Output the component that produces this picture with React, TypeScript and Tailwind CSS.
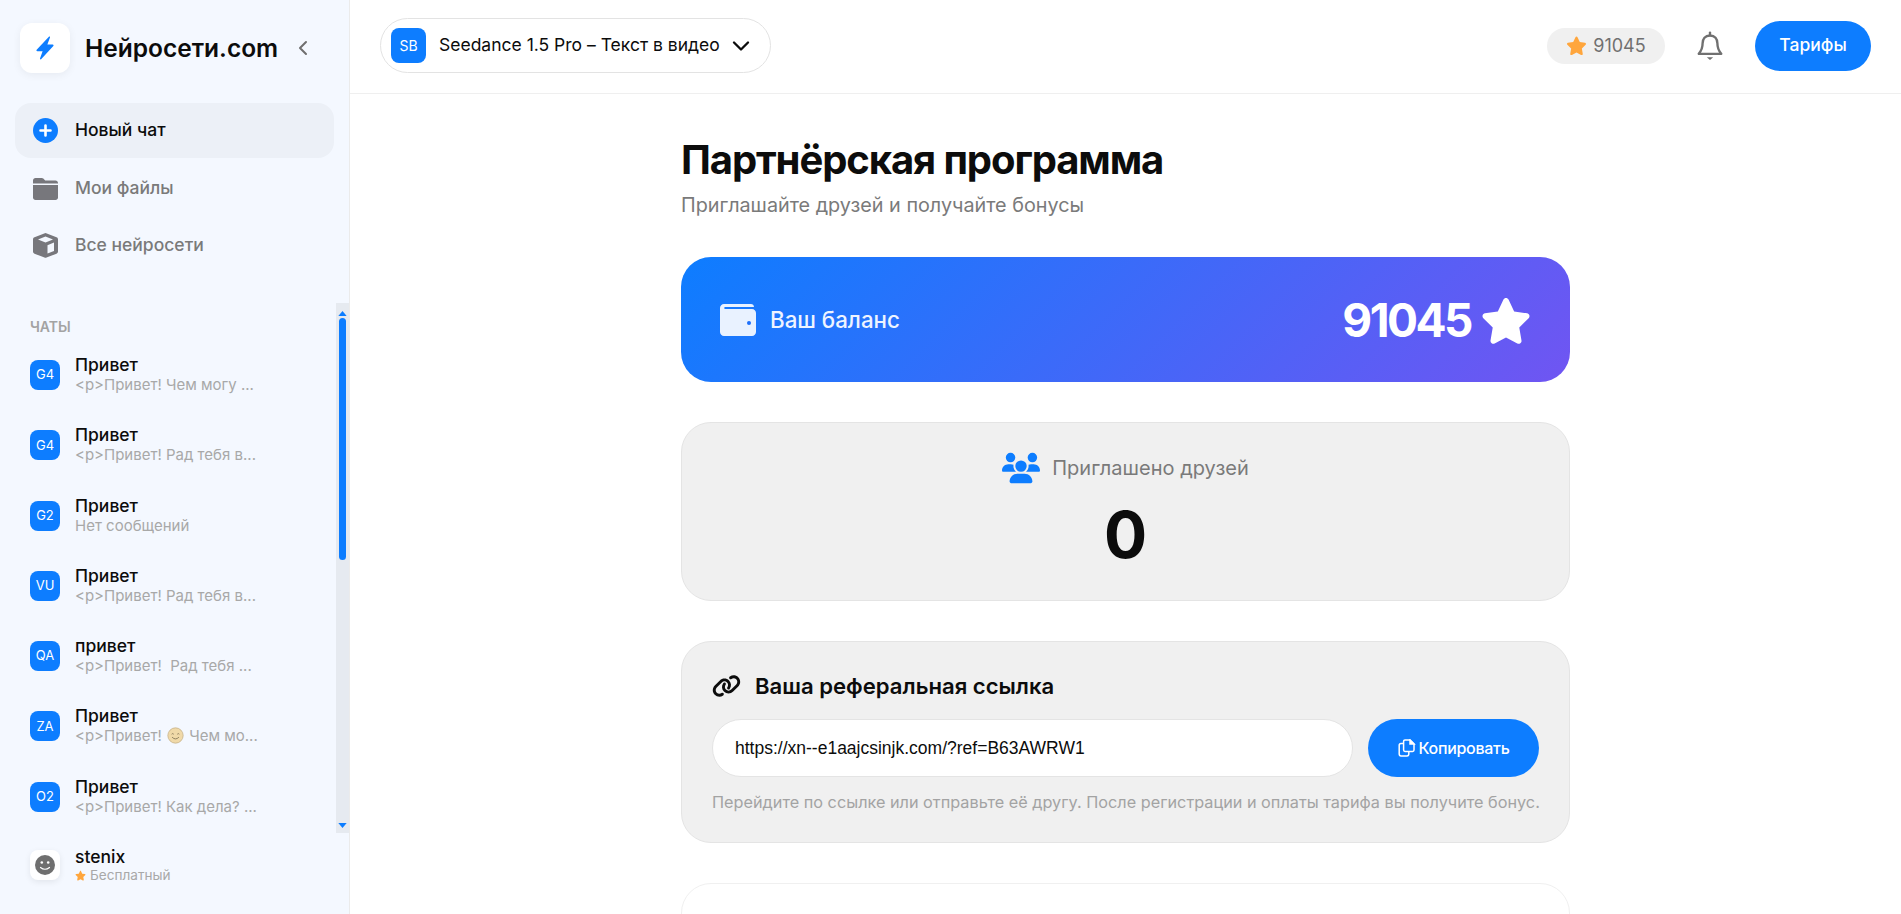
import React from 'react';
import { FaUsers, FaLink } from 'react-icons/fa6';
import { ChevronLeft, ChevronDown } from 'lucide-react';

interface Chat {
  badge: string;
  title: string;
  preview: React.ReactNode;
}

const STAR_PATH =
  'M12 1.8c.5 0 .95.3 1.17.75l2.6 5.5 5.95.86c.5.07.9.42 1.06.9.15.47.03 1-.33 1.34l-4.33 4.26 1.03 6.02c.08.5-.12 1-.53 1.3-.4.28-.94.32-1.38.08L12 20.02l-5.24 2.79c-.44.24-.98.2-1.38-.08-.41-.3-.61-.8-.53-1.3l1.03-6.02-4.33-4.26a1.32 1.32 0 0 1-.33-1.34c.16-.48.56-.83 1.06-.9l5.95-.86 2.6-5.5c.22-.45.67-.75 1.17-.75z';

function Star({ className }: { className: string }) {
  return (
    <svg viewBox="0 0 24 24" className={className} fill="currentColor">
      <path d={STAR_PATH} />
    </svg>
  );
}

function Smiley() {
  return (
    <svg viewBox="0 0 20 20" className="inline-block w-[17px] h-[17px] mx-[1px] align-[-3px]">
      <circle cx="10" cy="10" r="9" fill="#f0d9a8" stroke="#c9b58c" strokeWidth="1" />
      <path d="M5.5 8.5q1.2-1.5 2.4 0M12.1 8.5q1.2-1.5 2.4 0" fill="none" stroke="#8a7a5a" strokeWidth="1.1" />
      <path d="M6 12q4 4 8 0" fill="none" stroke="#8a7a5a" strokeWidth="1.1" />
    </svg>
  );
}

const chats: Chat[] = [
  { badge: 'G4', title: 'Привет', preview: '<p>Привет! Чем могу ...' },
  { badge: 'G4', title: 'Привет', preview: '<p>Привет! Рад тебя в...' },
  { badge: 'G2', title: 'Привет', preview: 'Нет сообщений' },
  { badge: 'VU', title: 'Привет', preview: '<p>Привет! Рад тебя в...' },
  { badge: 'QA', title: 'привет', preview: '<p>Привет!  Рад тебя ...' },
  { badge: 'ZA', title: 'Привет', preview: <>{'<p>Привет! '}<Smiley />{' Чем мо...'}</> },
  { badge: 'O2', title: 'Привет', preview: '<p>Привет! Как дела? ...' },
];

function Sidebar() {
  return (
    <aside className="w-[350px] shrink-0 h-screen flex flex-col bg-[#f4f8ff] border-r border-[#ebebeb]">
      <div className="flex items-center pl-5 mt-[23px] h-[50px]">
        <div className="w-[50px] h-[50px] rounded-xl bg-white shadow-[0_2px_8px_rgba(0,0,0,0.06)] flex items-center justify-center">
          <svg viewBox="0 0 24 24" className="w-[26px] h-[26px]" fill="#0d7dff">
            <path d="M15.6 1.6c.5-.5 1.2 0 1 .6l-2.4 6.6h4.9c.7 0 1.1.8.6 1.3L8.4 22.3c-.5.5-1.2 0-1-.6l2.4-6.8H4.9c-.7 0-1.1-.8-.6-1.3z" />
          </svg>
        </div>
        <span className="ml-[15px] text-[24.500px] font-semibold text-[#0c0c0c] leading-none">Нейросети.com</span>
        <ChevronLeft className="ml-[13px] w-[24px] h-[24px] text-[#6f6f6f]" strokeWidth={2} />
      </div>

      <nav className="mt-[30px] px-[15px] flex flex-col">
        <div className="h-[55px] rounded-2xl bg-[#ecf0f7] flex items-center pl-[18px] gap-[17px]">
          <svg viewBox="0 0 25 25" className="w-[25px] h-[25px]">
            <circle cx="12.5" cy="12.5" r="12.5" fill="#0d7dff" />
            <path d="M12.5 7.5v10M7.5 12.5h10" stroke="#fff" strokeWidth="2.6" strokeLinecap="round" />
          </svg>
          <span className="text-[17.500px] font-medium text-[#0c0c0c]">Новый чат</span>
        </div>
        <div className="h-[57px] mt-[2px] flex items-center pl-[18px] gap-[17px]">
          <svg viewBox="0 0 25 22" className="w-[25px] h-[22px]" fill="#77777c">
            <path d="M2.5 0h6.3c.6 0 1.1.2 1.5.6l1.9 1.9h10.3c1.4 0 2.5 1 2.5 2.4v.6H0V2.500C0 1.100 1.100 0 2.500 0z" />
            <path d="M0 7h25v12.500c0 1.400-1.100 2.500-2.500 2.500h-20C1.100 22 0 20.900 0 19.500z" />
          </svg>
          <span className="text-[17.500px] font-medium text-[#7a7a7a]">Мои файлы</span>
        </div>
        <div className="h-[57px] flex items-center pl-[18px] gap-[17px]">
          <svg viewBox="0 0 25 25" className="w-[25px] h-[25px]" fill="#77777c">
            <path d="M12.500 0l11 4.300c.9.300 1.500 1.200 1.500 2.100v12.200c0 .9-.6 1.800-1.500 2.100l-10 3.900c-.6.300-1.400.3-2 0l-10-3.900C.6 20.400 0 19.500 0 18.600V6.400c0-.9.600-1.800 1.500-2.100z" />
            <path d="M5 6.500l7.500-3 7.500 3-7.500 3z" fill="#f4f8ff" />
            <path d="M14.500 12.200l6.500-2.600v8.300l-6.500 2.600z" fill="#f4f8ff" />
          </svg>
          <span className="text-[17.500px] font-medium text-[#7a7a7a]">Все нейросети</span>
        </div>
      </nav>

      <div className="mt-[29px] h-[530px] flex overflow-hidden">
        <div className="flex-1 pl-[30px] pt-[16px]">
          <div className="text-[14px] leading-[15px] font-semibold text-[#a3a3a3] uppercase">Чаты</div>
          <div className="mt-[26px] flex flex-col gap-[40.300px]">
            {chats.map((chat, i) => (
              <div key={i} className="flex h-[30px] items-center gap-[15px]">
                <div className="w-[30px] h-[30px] rounded-lg bg-[#0d7dff] flex items-center justify-center text-white text-[13px]">
                  {chat.badge}
                </div>
                <div className="flex flex-col -mt-[2px]">
                  <span className="text-[17.500px] leading-[22px] font-medium text-[#0c0c0c]">{chat.title}</span>
                  <span className="text-[15px] leading-[18px] text-[#a8a8a8] whitespace-pre">{chat.preview}</span>
                </div>
              </div>
            ))}
          </div>
        </div>
        <div className="w-[13px] bg-[#e6eaf0] flex flex-col items-center">
          <svg viewBox="0 0 10 6" className="w-[9px] h-[5px] mt-[8px]" fill="#0d7dff">
            <path d="M5 0l5 6H0z" />
          </svg>
          <div className="mt-[2px] w-[7px] h-[242px] rounded-full bg-[#0d7dff]" />
          <div className="flex-1" />
          <svg viewBox="0 0 10 6" className="w-[9px] h-[5px] mb-[5px]" fill="#0d7dff">
            <path d="M5 6L0 0h10z" />
          </svg>
        </div>
      </div>

      <div className="mt-[13px] pl-[30px] flex items-center gap-[15px]">
        <div className="w-[30px] h-[30px] rounded-lg bg-white shadow-[0_2px_6px_rgba(0,0,0,0.08)] flex items-center justify-center">
          <svg viewBox="0 0 20 20" className="w-[20px] h-[20px]">
            <circle cx="10" cy="10" r="10" fill="#6f6f6f" />
            <circle cx="6.800" cy="7.500" r="1.300" fill="#fff" />
            <circle cx="13.200" cy="7.500" r="1.300" fill="#fff" />
            <path d="M5.500 12.500q4.500 3.500 9 0" fill="none" stroke="#fff" strokeWidth="1.200" strokeLinecap="round" />
          </svg>
        </div>
        <div className="flex flex-col">
          <span className="text-[17.500px] leading-[21px] font-medium text-[#0c0c0c]">stenix</span>
          <span className="flex items-center gap-[4px] text-[13.600px] leading-[17px] text-[#a8a8a8]">
            <Star className="w-[11px] h-[11px] text-[#ffa63d]" />
            Бесплатный
          </span>
        </div>
      </div>
    </aside>
  );
}

function Header() {
  return (
    <header className="h-[94px] shrink-0 border-b border-[#efefef] flex items-center pl-[30px] pr-[30px] pb-[2px]">
      <div className="h-[55px] w-[391px] rounded-full border border-[#e3e3e3] flex items-center pl-[10px] gap-[13px]">
        <div className="w-[35px] h-[35px] rounded-lg bg-[#0d7dff] flex items-center justify-center text-white text-[14px]">SB</div>
        <span className="text-[17.500px] text-[#0c0c0c] whitespace-nowrap">Seedance 1.5 Pro – Текст в видео</span>
        <ChevronDown className="w-[28px] h-[28px] -ml-[6px] text-[#0c0c0c]" strokeWidth={2} />
      </div>
      <div className="ml-auto h-[36px] w-[118px] rounded-full bg-[#f0f0f0] flex items-center justify-center gap-[6px] text-[18px] text-[#707070]">
        <Star className="w-[21px] h-[21px] text-[#ffa63d]" />
        91045
      </div>
      <svg viewBox="0 0 24 28" className="ml-[32px] w-[26px] h-[30px]" fill="none" stroke="#707070" strokeWidth="2.200">
        <path d="M12 4.200c-4.600 0-6.900 3.300-6.900 7.300 0 5.200-1.400 7.300-3.600 9.800h21c-2.200-2.500-3.600-4.600-3.600-9.800 0-4-2.300-7.300-6.900-7.300z" strokeLinejoin="round" />
        <path d="M12 4V1.500" strokeLinecap="round" />
        <path d="M9 24.600h6l-3 2.400z" fill="#707070" stroke="none" />
      </svg>
      <button className="ml-[32px] h-[50px] w-[116px] rounded-full bg-[#0d7dff] text-white text-[17.500px] font-medium">Тарифы</button>
    </header>
  );
}

function Card({ children, className }: { children?: React.ReactNode; className: string }) {
  return <section className={`rounded-[30px] border ${className}`}>{children}</section>;
}

export default function App() {
  return (
    <div className="flex h-screen overflow-hidden bg-white text-[#0c0c0c] font-['Inter',sans-serif]">
      <Sidebar />
      <div className="flex-1 min-w-0 flex flex-col">
        <Header />
        <main className="flex-1 overflow-hidden">
          <div className="w-[889px] mx-auto pt-[38px]">
            <h1 className="text-[40px] leading-[56px] font-bold tracking-[-1.100px] text-[#0c0c0c]">Партнёрская программа</h1>
            <p className="text-[19.800px] leading-[28px] mt-[3px] text-[#7a7a7a]">Приглашайте друзей и получайте бонусы</p>

            <div className="mt-[38px] h-[125px] rounded-[30px] bg-[linear-gradient(135deg,#0d7dff,#7055f2)] flex items-center pl-[39px] pr-[38px] text-white">
              <svg viewBox="0 0 36 32" className="w-[36px] h-[32px]">
                <path d="M4 0h27c1.700 0 3 1.300 3 3H5C4 3 4 5 5 5h27c2.200 0 4 1.800 4 4v19c0 2.200-1.800 4-4 4H4c-2.200 0-4-1.800-4-4V4C0 1.800 1.800 0 4 0z" fill="#e9f2ff" />
                <circle cx="29" cy="19" r="2" fill="#1d70fb" />
              </svg>
              <span className="ml-[14px] text-[22.300px] font-medium text-[#eef4ff]">Ваш баланс</span>
              <span className="ml-auto text-[46px] leading-none font-bold tracking-[-2.500px]">91045</span>
              <Star className="ml-[9px] w-[52px] h-[52px] text-white" />
            </div>

            <Card className="mt-[40px] h-[179px] bg-[#f0f0f0] border-[#e4e4e4] flex flex-col items-center pt-[29px]">
              <div className="flex items-center gap-[12px]">
                <FaUsers className="w-[38px] h-[32px] text-[#0d7dff]" />
                <span className="text-[20px] text-[#7a7a7a]">Приглашено друзей</span>
              </div>
              <div className="mt-[12px] text-[64px] leading-[77px] font-bold text-[#0c0c0c]">0</div>
            </Card>

            <Card className="mt-[40px] h-[202px] bg-[#f0f0f0] border-[#e4e4e4] pl-[30px] pr-[30px] pt-[29px]">
              <div className="flex items-center gap-[14px]">
                <FaLink className="w-[29px] h-[24px] text-[#0c0c0c]" />
                <h2 className="text-[22.100px] leading-[30px] font-semibold text-[#0c0c0c]">Ваша реферальная ссылка</h2>
              </div>
              <div className="mt-[18px] flex items-center gap-[15px]">
                <div className="h-[58px] flex-1 rounded-full bg-white border border-[#e4e4e4] flex items-center pl-[22px] text-[17.500px] text-[#0c0c0c] font-['Liberation_Sans',sans-serif]">
                  https://xn--e1aajcsinjk.com/?ref=B63AWRW1
                </div>
                <button className="h-[58px] w-[171px] rounded-full bg-[#0d7dff] text-white text-[16px] font-medium flex items-center justify-center gap-[3px] tracking-[-0.300px]">
                  <svg viewBox="0 0 18 18" className="w-[18px] h-[18px]" fill="none" stroke="#fff" strokeWidth="1.500">
                    <path d="M7 1h5l4 4v6c0 .8-.6 1.400-1.400 1.400H7c-.8 0-1.400-.6-1.400-1.400V2.400C5.600 1.600 6.200 1 7 1z" strokeLinejoin="round" />
                    <path d="M5.600 4.500H3c-1 0-1.800.8-1.800 1.800v8.800c0 1 .8 1.800 1.800 1.800h6c1 0 1.800-.8 1.800-1.800v-2.700" />
                    <path d="M12 1v4h4z" fill="#fff" />
                  </svg>
                  Копировать
                </button>
              </div>
              <p className="mt-[15px] text-[16.250px] leading-[20px] text-[#a3a3a3] whitespace-nowrap">
                Перейдите по ссылке или отправьте её другу. После регистрации и оплаты тарифа вы получите бонус.
              </p>
            </Card>

            <Card className="mt-[40px] h-[200px] bg-white border-[#f0f0f0]" />
          </div>
        </main>
      </div>
    </div>
  );
}
